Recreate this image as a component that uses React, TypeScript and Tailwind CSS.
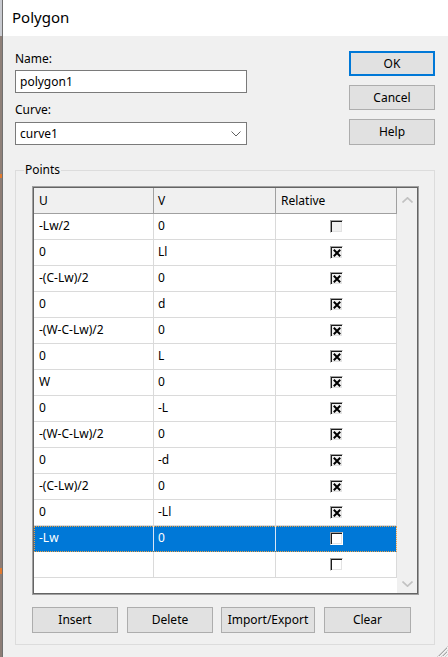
import React from "react";

type Row = { u: string; v: string; checked: boolean; kind?: "gray" | "sel" | "white" };

const rows: Row[] = [
  { u: "-Lw/2", v: "0", checked: false, kind: "gray" },
  { u: "0", v: "Ll", checked: true },
  { u: "-(C-Lw)/2", v: "0", checked: true },
  { u: "0", v: "d", checked: true },
  { u: "-(W-C-Lw)/2", v: "0", checked: true },
  { u: "0", v: "L", checked: true },
  { u: "W", v: "0", checked: true },
  { u: "0", v: "-L", checked: true },
  { u: "-(W-C-Lw)/2", v: "0", checked: true },
  { u: "0", v: "-d", checked: true },
  { u: "-(C-Lw)/2", v: "0", checked: true },
  { u: "0", v: "-Ll", checked: true },
  { u: "-Lw", v: "0", checked: false, kind: "sel" },
  { u: "", v: "", checked: false, kind: "white" },
];

function CheckBox({ checked, white }: { checked: boolean; white: boolean }) {
  return (
    <span
      className={`flex h-[13px] w-[13px] items-center justify-center border border-t-[#a0a0a0] border-l-[#a0a0a0] border-r-white border-b-white shadow-[inset_1px_1px_0_#1a1a1a,inset_-1px_-1px_0_#e3e3e3] ${
        white ? "bg-white" : "bg-[#f0f0f0]"
      }`}
    >
      {checked && (
        <svg width="8" height="8" viewBox="0 0 8 8" className="ml-[1px] mt-[1px]">
          <path d="M0.8 0.8 L7.2 7.2 M7.2 0.8 L0.8 7.2" stroke="#000" strokeWidth="2" />
        </svg>
      )}
    </span>
  );
}

function Btn({ label, w, extra = "" }: { label: string; w: string; extra?: string }) {
  return (
    <div
      className={`flex h-[26px] items-center justify-center border border-[#adadad] bg-[#e1e1e1] text-[12px] text-black ${w} ${extra}`}
    >
      {label}
    </div>
  );
}

export default function App() {
  const font = { fontFamily: '"Noto Sans", "Segoe UI", sans-serif' };
  return (
    <div className="flex h-[657px] w-[448px] overflow-hidden" style={font}>
      {/* background strip on the left */}
      <div className="flex w-[2px] flex-col">
        <div className="h-[36px] bg-[#c9cbd1]" />
        <div className="h-[138px] bg-[#8e8079]" />
        <div className="h-[4px] bg-[#e07a30]" />
        <div className="h-[390px] bg-[#8c7d76]" />
        <div className="h-[6px] bg-[#e07a30]" />
        <div className="flex-1 bg-[#8c7d76]" />
      </div>

      <div className="relative flex flex-1 flex-col border-l border-[#707070] bg-[#f0f0f0]">
        {/* title bar */}
        <div className="flex h-[36px] items-center bg-white pl-[9px] pb-[2px] text-[15px] text-black">
          Polygon
        </div>

        {/* body */}
        <div className="flex flex-1 flex-col pl-[12px] pr-[13px] pt-[15px]">
          <div className="flex items-start justify-between">
            <div className="flex w-[232px] flex-col">
              <div className="text-[12px] leading-[16px] text-black">Name:</div>
              <div className="mt-[3px] flex h-[23px] items-center border border-[#7a7a7a] bg-white px-[4px] text-[12px] text-black">
                polygon1
              </div>
              <div className="mt-[9px] text-[12px] leading-[16px] text-black">Curve:</div>
              <div className="mt-[4px] flex h-[23px] items-center justify-between border border-[#7a7a7a] bg-white pl-[4px] pr-[5px] text-[12px] text-black">
                <span>curve1</span>
                <svg width="10" height="6" viewBox="0 0 10 6">
                  <path d="M0.5 0.5 L5 5 L9.5 0.5" fill="none" stroke="#606060" strokeWidth="1" />
                </svg>
              </div>
            </div>
            <div className="flex w-[86px] flex-col gap-[9px]">
              <div className="flex h-[25px] items-center justify-center border-2 border-[#0078d7] bg-[#e1e1e1] text-[12px] text-black">
                OK
              </div>
              <div className="flex h-[25px] items-center justify-center border border-[#adadad] bg-[#e1e1e1] text-[12px] text-black">
                Cancel
              </div>
              <div className="flex h-[26px] items-center justify-center border border-[#adadad] bg-[#e1e1e1] text-[12px] text-black">
                Help
              </div>
            </div>
          </div>

          {/* group box */}
          <div className="relative mt-[25px] flex h-[475px] flex-col border border-[#dcdcdc] pl-[16px] pr-[15px] pt-[15px]">
            <div className="absolute left-[8px] top-[-9px] bg-[#f0f0f0] px-[1px] text-[12px] leading-[16px] text-black">
              Points
            </div>

            {/* table */}
            <div className="flex h-[409px] w-[387px] border border-[#a0a0a0]">
              <div className="flex flex-1 border border-[#646464] bg-white">
                <div className="flex w-[363px] flex-col">
                  {/* header */}
                  <div className="flex h-[26px] border-b border-[#a0a0a0] bg-[#f0f0f0] text-[12px] text-black">
                    <div className="flex w-[120px] items-center border-r border-[#a0a0a0] pl-[5px]">U</div>
                    <div className="flex w-[122px] items-center border-r border-[#a0a0a0] pl-[4px]">V</div>
                    <div className="flex w-[121px] items-center border-r border-[#a0a0a0] pl-[5px]">Relative</div>
                  </div>
                  {rows.map((r, i) => {
                    const sel = r.kind === "sel";
                    return (
                      <div
                        key={i}
                        className={`flex h-[26px] border-b text-[12px] ${
                          sel
                            ? "bg-[#0078d7] text-white border-[#0078d7] outline-1 outline-dotted outline-[#f0a040] -outline-offset-1"
                            : "bg-white text-black border-[#dadada]"
                        }`}
                      >
                        <div
                          className={`flex w-[120px] items-center border-r pl-[5px] pb-[2px] ${
                            sel ? "border-[#d8e6f5]" : "border-[#dadada]"
                          }`}
                        >
                          {r.u}
                        </div>
                        <div
                          className={`flex w-[122px] items-center border-r pl-[4px] pb-[2px] ${
                            sel ? "border-[#d8e6f5]" : "border-[#dadada]"
                          }`}
                        >
                          {r.v}
                        </div>
                        <div className="flex w-[121px] items-center justify-center border-r border-[#dadada] pl-[1px]">
                          <CheckBox checked={r.checked} white={r.kind === "sel" || r.kind === "white"} />
                        </div>
                      </div>
                    );
                  })}
                </div>
                {/* scrollbar */}
                <div className="flex flex-1 flex-col items-center justify-between bg-[#f0f0f0] pb-[6px] pt-[9px]">
                  <svg width="11" height="6" viewBox="0 0 11 6">
                    <path d="M0.5 5.5 L5.5 0.8 L10.5 5.5" fill="none" stroke="#c2c2c2" strokeWidth="1.6" />
                  </svg>
                  <svg width="11" height="6" viewBox="0 0 11 6">
                    <path d="M0.5 0.5 L5.5 5.2 L10.5 0.5" fill="none" stroke="#c2c2c2" strokeWidth="1.6" />
                  </svg>
                </div>
              </div>
            </div>

            {/* buttons */}
            <div className="mt-[12px] flex">
              <Btn label="Insert" w="w-[86px]" />
              <Btn label="Delete" w="w-[86px]" extra="ml-[9px]" />
              <Btn label="Import/Export" w="w-[94px]" extra="ml-[8px]" />
              <Btn label="Clear" w="w-[87px]" extra="ml-[9px]" />
            </div>
          </div>
        </div>

        {/* resize grip */}
        <svg className="absolute bottom-0 right-0" width="12" height="12" viewBox="0 0 12 12">
          <path d="M11 3 L3 11 M11 7 L7 11" stroke="#a8a8a8" strokeWidth="1" />
          <path d="M12 1 L1 12 M12 5 L5 12 M12 9 L9 12" stroke="#d0d0d0" strokeWidth="1" />
        </svg>
      </div>
    </div>
  );
}
